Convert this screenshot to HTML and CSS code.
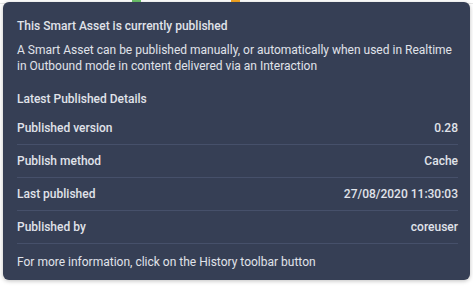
FILE: index.html
```html
<!DOCTYPE html>
<html>
<head>
<meta charset="utf-8">
<link rel="stylesheet" href="styles.css">
</head>
<body>
<div class="backdrop">
  <div class="strip">
    <span class="chip chip-green"></span>
    <span class="chip chip-orange"></span>
  </div>
  <div class="tooltip">
    <div class="title">This Smart Asset is currently published</div>
    <p class="desc">A Smart Asset can be published manually, or automatically when used in Realtime in Outbound mode in content delivered via an Interaction</p>
    <div class="subtitle">Latest Published Details</div>
    <div class="rows">
      <div class="row"><span class="label">Published version</span><span class="value">0.28</span></div>
      <div class="row"><span class="label">Publish method</span><span class="value">Cache</span></div>
      <div class="row"><span class="label">Last published</span><span class="value">27/08/2020 11:30:03</span></div>
      <div class="row"><span class="label">Published by</span><span class="value">coreuser</span></div>
    </div>
    <div class="footer">For more information, click on the History toolbar button</div>
  </div>
</div>
</body>
</html>
```
FILE: styles.css
```css
html, body {
  margin: 0;
  padding: 0;
  background: #ffffff;
}
body {
  font-family: Roboto, "Liberation Sans", sans-serif;
}
.backdrop {
  position: relative;
  width: 473px;
  height: 287px;
  overflow: hidden;
}
.strip {
  height: 3px;
  border-bottom: 1px solid #e6e6e6;
  display: flex;
}
.chip {
  display: block;
  height: 3px;
  width: 9px;
}
.chip-green { background: #6cc36a; margin-left: 132px; }
.chip-orange { background: #f5a623; margin-left: 90px; }
.tooltip {
  position: absolute;
  left: 3px;
  top: 2px;
  width: 467px;
  height: 278px;
  box-sizing: border-box;
  background: #363f55;
  border-radius: 6px;
  box-shadow: 0 1px 4px rgba(0,0,0,0.25);
  padding: 16px 12px 8px 14px;
  color: #e0e3ea;
  font-size: 12px;
  line-height: 16px;
}
.title {
  font-weight: 500;
}
.desc {
  margin: 8px 0 0 0;
}
.subtitle {
  margin-top: 17px;
  font-weight: 500;
}
.rows {
  margin-top: 5px;
}
.row {
  display: flex;
  justify-content: space-between;
  align-items: center;
  height: 32px;
  border-bottom: 1px solid #46506a;
}
.label, .value {
  font-weight: 500;
}
.footer {
  margin-top: 10px;
}
```
